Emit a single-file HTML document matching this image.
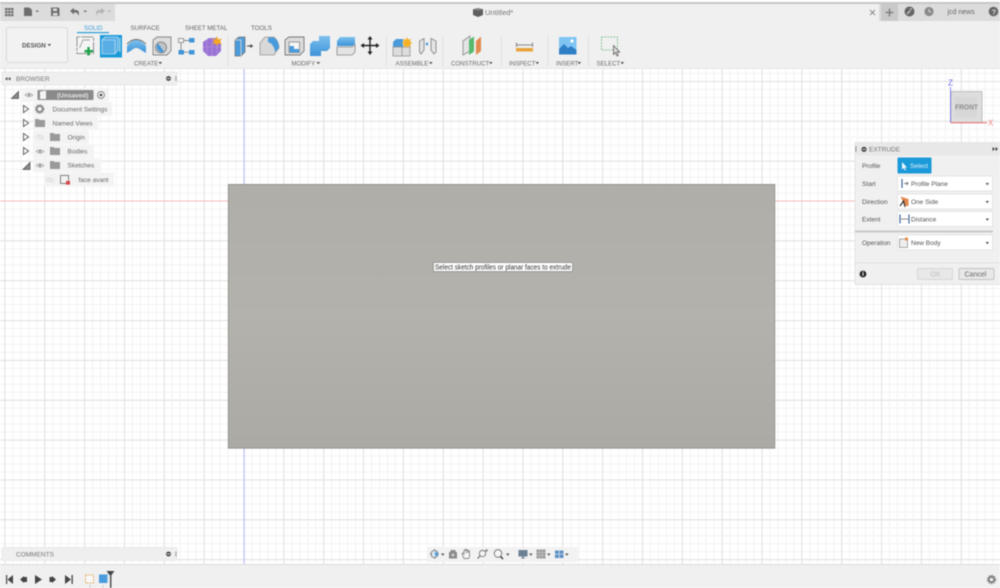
<!DOCTYPE html>
<html><head><meta charset="utf-8"><title>Untitled</title>
<style>
html,body{margin:0;padding:0;background:#fff;width:1000px;height:588px;overflow:hidden}
svg{display:block;filter:blur(.5px)}
text{font-family:"Liberation Sans",sans-serif;font-size:6.5px;fill:#666}
.h{font-size:6.1px;fill:#6a6a6a}
.t{font-size:6.5px;fill:#555}
</style></head><body>
<svg width="1000" height="588" viewBox="0 0 1000 588" xmlns="http://www.w3.org/2000/svg">
<defs>
<pattern id="minor" width="7.97" height="7.97" patternUnits="userSpaceOnUse" x="4.4" y="1.25"><path d="M.5 0V7.970M0 .5H7.970" fill="none" stroke="#f3f3f5" stroke-width="1"/></pattern>
<pattern id="major" width="39.85" height="39.85" patternUnits="userSpaceOnUse" x="4.4" y="1.25"><path d="M.5 0V39.850M0 .5H39.850" fill="none" stroke="#e1e1e1" stroke-width="1"/></pattern>
<linearGradient id="body" x1="0" y1="0" x2="0" y2="1"><stop offset="0" stop-color="#afaea8"/><stop offset=".5" stop-color="#b3b2ac"/><stop offset="1" stop-color="#abaaa4"/></linearGradient>
<linearGradient id="blue" x1="0" y1="0" x2="0" y2="1"><stop offset="0" stop-color="#7cc0ee"/><stop offset="1" stop-color="#3d93d8"/></linearGradient>
<g id="eye"><path d="M-4 0Q0-3.400 4 0Q0 3.400-4 0Z" fill="#e4e4e4" stroke="#a5a5a5" stroke-width=".8"/><circle r="1.200" fill="#959595"/></g>
<g id="eyeoff"><path d="M-4 0Q0-3.400 4 0Q0 3.400-4 0Z" fill="#f2f2f2" stroke="#dadada" stroke-width=".8"/><path d="M-3-3L3 3" stroke="#dadada" stroke-width=".8"/></g>
<g id="folder"><path d="M0 1H3.500L4.500 2H10V9H0Z" fill="#9a9a9a"/></g>
<path id="open" d="M.5 .5V7.500L5.500 4Z" fill="#fff" stroke="#666" stroke-width="1"/>
<path id="tri" d="M0 7L7 7L7 0Z" fill="#8a8a8a" stroke="#555" stroke-width=".8"/>
<path id="dd" d="M0 0H3.600L1.800 2.200Z" fill="#555"/>
</defs>

<!-- canvas grid -->
<rect width="1000" height="588" fill="#fff"/>
<rect width="1000" height="588" fill="url(#minor)"/>
<rect width="1000" height="588" fill="url(#major)"/>
<rect x="0" y="200.500" width="1000" height="1" fill="#f9bcbc"/>
<rect x="243.500" y="68" width="1.200" height="497" fill="#bcbcf2"/>

<!-- body -->
<rect x="228.300" y="184.400" width="546.500" height="263.800" fill="url(#body)" stroke="#8f8e88" stroke-width=".8"/>
<rect x="433.500" y="262.500" width="139" height="9" fill="#fdfdfd" stroke="#777" stroke-width=".6"/>
<text x="435" y="269.300" style="font-size:6.900px;fill:#333" textLength="136" lengthAdjust="spacingAndGlyphs">Select sketch profiles or planar faces to extrude</text>

<!-- top bars -->
<rect x="0" y="0" width="1000" height="21" fill="#dcdcdc"/>
<rect x="0" y="0" width="1000" height="2" fill="#fff"/>
<rect x="0" y="2" width="1000" height="2" fill="#c6c6c6"/>
<rect x="115" y="4" width="764" height="17" fill="#f0f0f0"/>
<rect x="0" y="21" width="1000" height="47.500" fill="#f0f0f0"/>
<rect x="0" y="68" width="1000" height="1" fill="#e6e6e6"/>

<!-- quick access -->
<g fill="#6e6e6e">
<g><rect x="5" y="8" width="2.500" height="2.200"/><rect x="8" y="8" width="2.500" height="2.200"/><rect x="11" y="8" width="2.500" height="2.200"/><rect x="5" y="11" width="2.500" height="2.200"/><rect x="8" y="11" width="2.500" height="2.200"/><rect x="11" y="11" width="2.500" height="2.200"/><rect x="5" y="14" width="2.500" height="2.200"/><rect x="8" y="14" width="2.500" height="2.200"/><rect x="11" y="14" width="2.500" height="2.200"/></g>
<path d="M24 7.500H29.500L32 10V16H24Z"/>
<path d="M35.500 10.500H39L37.250 12.500Z"/>
<path d="M51 7.500H58.500L59.500 8.500V16H51ZM53 8.500V11H57V8.500ZM53 13V15.500H57.500V13Z" fill-rule="evenodd"/>
<path d="M70 11L74 7.800V10H76C79 10 79.500 13 78.500 16C78 13.500 77 12.500 75 12.500H74V14.500Z"/>
<path d="M83.500 10.500H87L85.250 12.500Z"/>
<path d="M105 11L101 7.800V10H99C96 10 95.500 13 96.500 16C97 13.500 98 12.500 100 12.500H101V14.500Z" fill="#b5b5b5"/>
<path d="M107.500 10.500H111L109.250 12.500Z" fill="#b5b5b5"/>
</g>

<!-- title -->
<path d="M473 9.200L478 8L483 9.200V15L478 17L473 15Z" fill="#5e5e5e"/><path d="M473 9.200L478 10.500L483 9.200L478 8Z" fill="#8a8a8a"/>
<text x="485" y="15" style="font-size:7.500px;fill:#777">Untitled*</text>
<path d="M870 10L875 15M875 10L870 15" stroke="#888" stroke-width=".9"/>

<!-- right top -->
<rect x="881" y="4" width="17" height="17" fill="#c9c9c9"/>
<path d="M889.500 8.500V16.500M885.500 12.500H893.500" stroke="#777" stroke-width="1.300"/>
<circle cx="909.500" cy="11.500" r="5" fill="#666"/><path d="M907 14L910.500 10.500M910 9H912" stroke="#ddd" stroke-width="1.100"/>
<circle cx="929" cy="11.500" r="4.600" fill="#8a8a8a"/><path d="M929 9V11.800H931.300" stroke="#ddd" stroke-width=".9" fill="none"/>
<text x="947.500" y="14" style="font-size:7px;fill:#666">jcd news</text>
<circle cx="993.500" cy="11.500" r="4.800" fill="#666"/><text x="991.600" y="14.300" style="font-size:7.500px;font-weight:bold;fill:#ddd">?</text>

<!-- design -->
<rect x="6.500" y="27.500" width="61" height="35" rx="2" fill="#f2f2f2" stroke="#d3d3d3" stroke-width=".8"/>
<text x="22" y="47.300" style="font-size:6.200px;font-weight:bold;fill:#555">DESIGN</text>
<use href="#dd" x="47.500" y="44"/>

<!-- tabs -->
<text x="84" y="30" style="font-size:6.200px;fill:#3d9ad6">SOLID</text>
<rect x="77" y="32" width="32" height="1.200" fill="#2b9ad8"/>
<text x="130.500" y="30" style="font-size:6.200px;fill:#666">SURFACE</text>
<text x="185" y="30" style="font-size:6.200px;fill:#666">SHEET METAL</text>
<text x="251" y="30" style="font-size:6.200px;fill:#666">TOOLS</text>

<!-- CREATE -->
<g>
<rect x="77" y="37" width="16.500" height="16.500" fill="#f5f5f5" stroke="#777" stroke-width=".8" stroke-dasharray="3 1.200 12 1.200"/>
<path d="M79.500 48L83 40H90" fill="none" stroke="#888" stroke-width=".7"/>
<path d="M88.500 47V55.500M84.500 51.200H93" stroke="#1fa24a" stroke-width="2.400"/>
<rect x="100" y="35" width="22" height="22.500" fill="#1a9ad8"/>
<path d="M102 40L105 37H118V50L115 54H102Z" fill="#5aaee6" stroke="#e8f3fa" stroke-width=".6"/>
<path d="M102 40H115V54" fill="none" stroke="#d2e8f6" stroke-width=".6"/>
<path d="M119.800 38V52" stroke="#fff" stroke-width=".8"/>
<path d="M127 46Q136 34 146 46V53L141 50Q136 46 132 50L127 53Z" fill="url(#blue)"/>
<path d="M127 44Q136 35 146 44" fill="none" stroke="#666" stroke-width=".9"/>
<path d="M153 40L157 37H171V51L167 55H153Z" fill="#dcdcdc" stroke="#888" stroke-width=".9"/>
<circle cx="161" cy="47.500" r="5.500" fill="#bfc4c8" stroke="#777" stroke-width=".8"/>
<path d="M161 47.500L158 43.500A5.500 5.500 0 0 0 164 52Z" fill="#3f95d8"/>
<rect x="178.500" y="38.500" width="5" height="4" fill="#f5f5f5" stroke="#777" stroke-width=".7"/>
<rect x="189" y="38" width="5.500" height="4.500" fill="#3f95d8"/>
<rect x="178.500" y="50" width="5.500" height="4.500" fill="#3f95d8"/>
<rect x="189" y="50" width="5.500" height="4.500" fill="#3f95d8"/>
<path d="M184 40.500H189M181 43V50M184 52.200H189" stroke="#666" stroke-width=".7"/>
<path d="M203 42L209 38H216L221 44V51L216 56H208L203 51Z" fill="#9a72d6"/>
<path d="M203 47H221M212 38V56M207 40V55M217 41V54" stroke="#b697e0" stroke-width=".6"/>
<path d="M217 36L218.300 39.500L221.800 38.500L220.200 41.500L221.800 44.500L218.300 43.500L217 46L215.700 43.500L212.500 44.500L214 41.500L212.500 38.500L215.700 39.500Z" fill="#f5a623"/>
</g>
<text x="134" y="65.300" class="h">CREATE</text><use href="#dd" x="158.500" y="62"/>
<rect x="227.500" y="36" width=".8" height="30" fill="#dcdcdc"/>

<!-- MODIFY -->
<g>
<path d="M235 40L239 37H245V52L241 56H235Z" fill="#4a9bdc" stroke="#777" stroke-width=".8"/>
<path d="M235 40H241V56" fill="none" stroke="#cfcfcf" stroke-width="1"/>
<path d="M247 46H252M250.300 44.500L252.500 46L250.300 47.500" fill="none" stroke="#444" stroke-width=".9"/>
<path d="M260 55V43L265 37H274Q279 41 279 48L274 55Z" fill="#d8d8d8" stroke="#999" stroke-width=".8"/>
<path d="M268 37.500H274Q279 41 279 48L275 52Q274 44 268 42Z" fill="#4a9bdc"/>
<path d="M285 40L289 37H304V51L300 55H285Z" fill="#dcdcdc" stroke="#777" stroke-width=".9"/>
<rect x="289" y="42" width="10.500" height="10.500" fill="#f7f7f7" stroke="#777" stroke-width=".7"/>
<path d="M289.500 46H294V49H299V52.500H289.500Z" fill="#4a9bdc"/>
<path d="M310 44L313 41H319V36L322 36H330V48L327 51H321V56H310Z" fill="url(#blue)"/>
<path d="M337 41L340 37H355V44L352 46H337Z" fill="url(#blue)"/>
<path d="M337 47H352L355 44.500V52L352 55H337Z" fill="#e4e4e4" stroke="#888" stroke-width=".8"/>
<path d="M370 37.500V53.500M362 45.500H378" stroke="#222" stroke-width="1.400"/>
<path d="M370 36L367.500 39.500H372.500ZM370 55L367.500 51.500H372.500ZM360.500 45.500L364 43V48ZM379.500 45.500L376 43V48Z" fill="#222"/>
</g>
<text x="291.500" y="65.300" class="h">MODIFY</text><use href="#dd" x="316.500" y="62"/>
<rect x="386" y="36" width=".8" height="30" fill="#dcdcdc"/>

<!-- ASSEMBLE -->
<g>
<path d="M393 42L396 39H403V56H393Z" fill="#4a9bdc"/>
<rect x="393" y="47" width="17" height="9" fill="#dcdcdc" stroke="#888" stroke-width=".7"/>
<path d="M402 47V56" stroke="#888" stroke-width=".7"/>
<path d="M407 37L408.200 39.800L411 38.800L410 41.500L412.500 43L410 44.200L411 47L408.200 46L407 48L405.800 46L403 47L404 44.200L401.500 43L404 41.500L403 38.800L405.800 39.800Z" fill="#f5b026"/>
<path d="M419.500 41L424 38.500V50L421 54L419.500 52Z" fill="#e4e4e4" stroke="#888" stroke-width=".9"/>
<path d="M436 41L431 38.500V50L434 54L436 52Z" fill="#e4e4e4" stroke="#888" stroke-width=".9"/>
<path d="M425 44L428 42V46Z" fill="#4a9bdc"/>
</g>
<text x="395.500" y="65.300" class="h">ASSEMBLE</text><use href="#dd" x="429" y="62"/>
<rect x="442.500" y="36" width=".8" height="30" fill="#dcdcdc"/>

<!-- CONSTRUCT -->
<g>
<path d="M463 41L470 36V51L463 55Z" fill="#e4e4e4" stroke="#888" stroke-width=".8"/>
<path d="M469 40L474 36.500V51.500L469 55Z" fill="#55b96e"/>
<path d="M476 41L481 36.500V51L476 55Z" fill="#e28a4f"/>
</g>
<text x="451" y="65.300" class="h">CONSTRUCT</text><use href="#dd" x="489" y="62"/>
<rect x="501" y="36" width=".8" height="30" fill="#dcdcdc"/>

<!-- INSPECT -->
<g>
<rect x="516" y="48" width="17" height="3.500" fill="#e8a33a"/>
<path d="M516.500 42.500V47M532.500 42.500V47M517 45H532" stroke="#666" stroke-width=".8" fill="none"/>
</g>
<text x="509" y="65.300" class="h">INSPECT</text><use href="#dd" x="535.500" y="62"/>
<rect x="547.500" y="36" width=".8" height="30" fill="#dcdcdc"/>

<!-- INSERT -->
<g>
<rect x="559" y="37" width="17.500" height="17.500" fill="#7fc4f3"/>
<path d="M559 54.500V49L564 44L568 48L571 46L576.500 50V54.500Z" fill="#2f7fc7"/>
<circle cx="572" cy="41" r="1.600" fill="#fff"/>
</g>
<text x="556" y="65.300" class="h">INSERT</text><use href="#dd" x="577.500" y="62"/>
<rect x="588" y="36" width=".8" height="30" fill="#dcdcdc"/>

<!-- SELECT -->
<rect x="601.500" y="37" width="16" height="13" fill="none" stroke="#6dbb86" stroke-width=".8" stroke-dasharray="2 1"/>
<path d="M613.500 45.500V54.500L615.500 52.500L617 56L618.300 55.400L617 52H619.700Z" fill="#ddd" stroke="#555" stroke-width=".7"/>
<text x="596.500" y="65.300" class="h">SELECT</text><use href="#dd" x="620.500" y="62"/>

<!-- BROWSER -->
<rect x="2" y="72" width="175" height="13" fill="#efefef" stroke="#e2e2e2" stroke-width=".6"/>
<path d="M5 78.800L7.500 77V80.600ZM8 78.800L10.500 77V80.600Z" fill="#555"/>
<text x="16" y="81" style="font-size:6.500px;fill:#777">BROWSER</text>
<circle cx="168.500" cy="78.500" r="2.400" fill="#444"/><rect x="167" y="78" width="3" height="1" fill="#ddd"/>
<rect x="175.500" y="76" width=".8" height="5" fill="#888"/>

<!-- tree -->
<g>
<rect x="22" y="88" width="87" height="14" fill="#f3f3f3"/>
<use href="#tri" x="11.500" y="91.500"/>
<use href="#eye" x="29" y="95"/>
<rect x="37.500" y="90" width="56" height="10" rx="1" fill="#8b8b8b"/>
<path d="M40 91.500L46 90.500V99H40Z" fill="#f4f4f4"/>
<text x="57" y="97.300" style="font-size:6.500px;font-weight:bold;fill:#e4e4e4">(Unsaved)</text>
<circle cx="101" cy="95" r="3.400" fill="#fff" stroke="#555" stroke-width=".7"/><circle cx="101" cy="95" r="1.400" fill="#444"/>

<rect x="33" y="102.500" width="79" height="13.500" fill="#f3f3f3"/>
<use href="#open" x="23" y="105"/>
<circle cx="39.700" cy="109" r="3" fill="none" stroke="#8a8a8a" stroke-width="2"/><circle cx="39.700" cy="109" r="4.200" fill="none" stroke="#8a8a8a" stroke-width="1" stroke-dasharray="1.500 1.300"/>
<text x="52.500" y="111.500" style="fill:#666">Document Settings</text>

<rect x="33" y="116.500" width="65" height="13.500" fill="#f3f3f3"/>
<use href="#open" x="23" y="119"/>
<use href="#folder" x="35" y="118"/>
<text x="52.500" y="125.500" style="fill:#666">Named Views</text>

<rect x="33" y="130.500" width="56" height="13.500" fill="#f3f3f3"/>
<use href="#open" x="23" y="133"/>
<use href="#eyeoff" x="40" y="137"/>
<use href="#folder" x="50" y="132"/>
<text x="67.500" y="139.500" style="fill:#666">Origin</text>

<rect x="33" y="144.500" width="61" height="13.500" fill="#f3f3f3"/>
<use href="#open" x="23" y="147"/>
<use href="#eye" x="40" y="151.500"/>
<use href="#folder" x="50" y="146"/>
<text x="67.500" y="153.500" style="fill:#666">Bodies</text>

<rect x="33" y="158.500" width="68" height="13.500" fill="#f3f3f3"/>
<use href="#tri" x="23" y="162.500"/>
<use href="#eye" x="40" y="165.500"/>
<use href="#folder" x="50" y="160"/>
<text x="67.500" y="167.500" style="fill:#666">Sketches</text>

<rect x="44" y="172.500" width="70" height="14" fill="#f3f3f3"/>
<use href="#eyeoff" x="50" y="180"/>
<rect x="60.500" y="175.500" width="8" height="8" fill="none" stroke="#666" stroke-width=".8"/>
<rect x="66" y="181" width="4" height="3.600" fill="#d9434a"/>
<text x="78.500" y="182" style="fill:#666">face avant</text>
</g>

<!-- view cube -->
<rect x="951" y="91.500" width="31" height="31" fill="#dddddd" stroke="#b5b5b5" stroke-width=".8"/>
<rect x="955" y="97" width="22" height="20" fill="#d7d7d7"/>
<text x="955" y="109.500" style="font-size:7.500px;font-weight:bold;fill:#8e8e8e" textLength="23" lengthAdjust="spacingAndGlyphs">FRONT</text>
<path d="M950.500 87V122.500" stroke="#7a7af0" stroke-width=".9"/>
<path d="M950.500 122.700H987" stroke="#e86a6a" stroke-width="1"/>
<text x="948" y="85.500" style="font-size:8px;fill:#6a6af0">Z</text>
<text x="988" y="125.500" style="font-size:8px;fill:#f08080">X</text>

<!-- EXTRUDE panel -->
<rect x="855" y="142.500" width="146" height="142" fill="#f0f0f0" stroke="#dcdcdc" stroke-width=".7"/>
<rect x="855" y="142.500" width="145" height="13" fill="#e8e8e8"/>
<rect x="855.500" y="146" width=".8" height="6" fill="#777"/>
<circle cx="864" cy="149.300" r="2.600" fill="#444"/><rect x="862.500" y="148.800" width="3" height="1" fill="#ddd"/>
<text x="869" y="151.500" style="font-size:6.500px;fill:#777">EXTRUDE</text>
<path d="M992.500 147L995 149L992.500 151ZM995.500 147L998 149L995.500 151Z" fill="#444"/>

<text x="862" y="168" class="t">Profile</text>
<rect x="897.500" y="157.500" width="34" height="16" rx="1" fill="#1b9ad9"/>
<path d="M902 162V169.500L903.800 168L905 170.500L906 170L904.900 167.500H907Z" fill="#eef7fc"/>
<text x="910" y="168" style="font-size:6.500px;fill:#e6f4fb">Select</text>

<text x="862" y="186" class="t">Start</text>
<rect x="897.500" y="176" width="95" height="15" fill="#fff" stroke="#dcdcdc" stroke-width=".7"/>
<path d="M902 179V188" stroke="#2d5a93" stroke-width="1.100"/><path d="M904 183.500H908M906.500 182L908 183.500L906.500 185" fill="none" stroke="#555" stroke-width=".7"/>
<text x="911" y="186" class="t">Profile Plane</text>
<use href="#dd" x="985.500" y="183"/>

<text x="862" y="204" class="t">Direction</text>
<rect x="897.500" y="194" width="95" height="15" fill="#fff" stroke="#dcdcdc" stroke-width=".7"/>
<path d="M900.500 196.500L908.500 199V206H905Z" fill="#e28a4f"/>
<path d="M900 206L903.500 201L905 207" fill="none" stroke="#333" stroke-width="1.200"/>
<text x="911" y="204" class="t">One Side</text>
<use href="#dd" x="985.500" y="201"/>

<text x="862" y="221.500" class="t">Extent</text>
<rect x="897.500" y="211.500" width="95" height="15" fill="#fff" stroke="#dcdcdc" stroke-width=".7"/>
<path d="M900 214.500V223.500M909 214.500V223.500" stroke="#2d5a93" stroke-width="1.100"/><path d="M901 219H908" stroke="#555" stroke-width=".7"/>
<text x="911" y="221.500" class="t">Distance</text>
<use href="#dd" x="985.500" y="218.500"/>

<rect x="855" y="230.500" width="138" height="2" fill="#c9c9c9"/>

<text x="862" y="245" class="t">Operation</text>
<rect x="897.500" y="235" width="95" height="15" fill="#fff" stroke="#dcdcdc" stroke-width=".7"/>
<rect x="899.500" y="239" width="8" height="8.500" fill="#eee" stroke="#888" stroke-width=".7"/>
<circle cx="906.500" cy="239" r="1.600" fill="#e8873d"/>
<text x="911" y="245" class="t">New Body</text>
<use href="#dd" x="985.500" y="242"/>

<rect x="855" y="262.500" width="145" height=".7" fill="#dcdcdc"/>
<circle cx="863" cy="274" r="3.400" fill="#222"/><rect x="862.400" y="272.800" width="1.200" height="3" fill="#eee"/><rect x="862.400" y="271.400" width="1.200" height=".9" fill="#eee"/>
<rect x="917.500" y="268.500" width="35" height="11" rx="1" fill="#e8e8e8" stroke="#cfcfcf" stroke-width=".7"/>
<text x="930.500" y="276.500" style="font-size:7px;fill:#c0c0c0">OK</text>
<rect x="959" y="268.500" width="35" height="11" rx="1" fill="#e8e8e8" stroke="#b5b5b5" stroke-width=".7"/>
<text x="964.500" y="276.500" style="font-size:7px;fill:#666">Cancel</text>

<!-- COMMENTS -->
<rect x="2" y="547.500" width="175" height="13" fill="#efefef" stroke="#e2e2e2" stroke-width=".6"/>
<text x="16" y="556.500" style="font-size:6.500px;fill:#777">COMMENTS</text>
<circle cx="168.500" cy="554" r="2.400" fill="#444"/><rect x="167" y="553.500" width="3" height="1" fill="#ddd"/>
<rect x="175.500" y="551.500" width=".8" height="5" fill="#888"/>

<!-- nav bar -->
<rect x="427" y="547" width="151" height="15" fill="#f2f2f2"/>
<g fill="#6f7d8c">
<circle cx="434.500" cy="554" r="3.600" fill="#dce7f0" stroke="#777" stroke-width=".8"/>
<path d="M435 551.500L439 554L435 556.500Z" fill="#4a9bdc"/>
<path d="M434.500 549V551M434.500 557V559M430 554H432" stroke="#777" stroke-width=".7"/>
<use href="#dd" x="441" y="553.500"/>
<rect x="449" y="552" width="8" height="6.500" fill="#8a8a8a"/><rect x="450.500" y="550" width="5" height="2" fill="#8a8a8a"/>
<circle cx="453" cy="555" r="1.400" fill="#d8d8d8"/>
<path d="M464 558.500L462 553.500Q463 552.500 464 554V550.500H465V549.500H466.500V553V550H468V553V551H469.500V555Q469.500 558.500 468 558.500Z" fill="#f5f5f5" stroke="#666" stroke-width=".7"/>
<circle cx="482.500" cy="553.500" r="3.200" fill="#f5f5f5" stroke="#666" stroke-width=".8"/>
<path d="M480 556L477.500 558.500" stroke="#666" stroke-width="1.200"/>
<path d="M486.500 549V552M485 550.500H488" stroke="#666" stroke-width=".7"/>
<circle cx="498" cy="553.500" r="3.800" fill="#f5f5f5" stroke="#666" stroke-width=".8"/>
<path d="M500.500 556.500L503 559" stroke="#333" stroke-width="1.300"/>
<use href="#dd" x="506" y="553.500"/>
<rect x="518.500" y="550" width="9" height="6.500" fill="#6c8094"/><path d="M521 558.500H525L523 556Z" fill="#6c8094"/>
<use href="#dd" x="529" y="553.500"/>
<rect x="536.500" y="549.500" width="9" height="9" fill="#9a9a9a"/>
<path d="M539.300 549.500V558.500M542.300 549.500V558.500M536.500 552.500H545.500M536.500 555.500H545.500" stroke="#d5d5d5" stroke-width=".5"/>
<use href="#dd" x="547" y="553.500"/>
<rect x="555" y="550.500" width="8.500" height="7.500" fill="#5f8fc4"/>
<path d="M559.200 550.500V558M555 554.200H563.500" stroke="#e4edf6" stroke-width=".7"/>
<use href="#dd" x="565" y="553.500"/>
</g>

<!-- timeline -->
<rect x="0" y="564.500" width="1000" height="23.500" fill="#f0f0f0"/>
<rect x="0" y="564" width="1000" height="1" fill="#dedede"/>
<g fill="#444">
<path d="M6 575H7.200V584H6ZM7.500 579.500L13 575V584Z"/>
<path d="M20 579.500L24 576V583ZM24 577H27V582H24Z"/>
<path d="M35 575L42 579.500L35 584Z"/>
<path d="M56 579.500L52 576V583ZM49.500 577H52V582H49.500Z"/>
<path d="M71.500 575H72.800V584H71.500ZM71 579.500L65 575V584Z"/>
</g>
<rect x="85.500" y="575" width="8" height="8" fill="#f8f8f8" stroke="#e0a040" stroke-width=".8" stroke-dasharray="2 1"/>
<rect x="99" y="574.500" width="8.500" height="8.500" fill="#4a9bdc"/>
<rect x="107" y="574" width="1" height="8" fill="#9fc7e8"/>
<path d="M106.500 571H114.500L111.500 575H109.500Z" fill="#444"/>
<rect x="110" y="574" width="1.400" height="14" fill="#444"/>
<path d="M90 585V588M103 585V588" stroke="#bbb" stroke-width=".7"/>
<circle cx="991.500" cy="579.500" r="2.700" fill="none" stroke="#777" stroke-width="1.800"/>
<circle cx="991.500" cy="579.500" r="4.200" fill="none" stroke="#777" stroke-width="1" stroke-dasharray="1.500 1.300"/>
</svg>
</body></html>
